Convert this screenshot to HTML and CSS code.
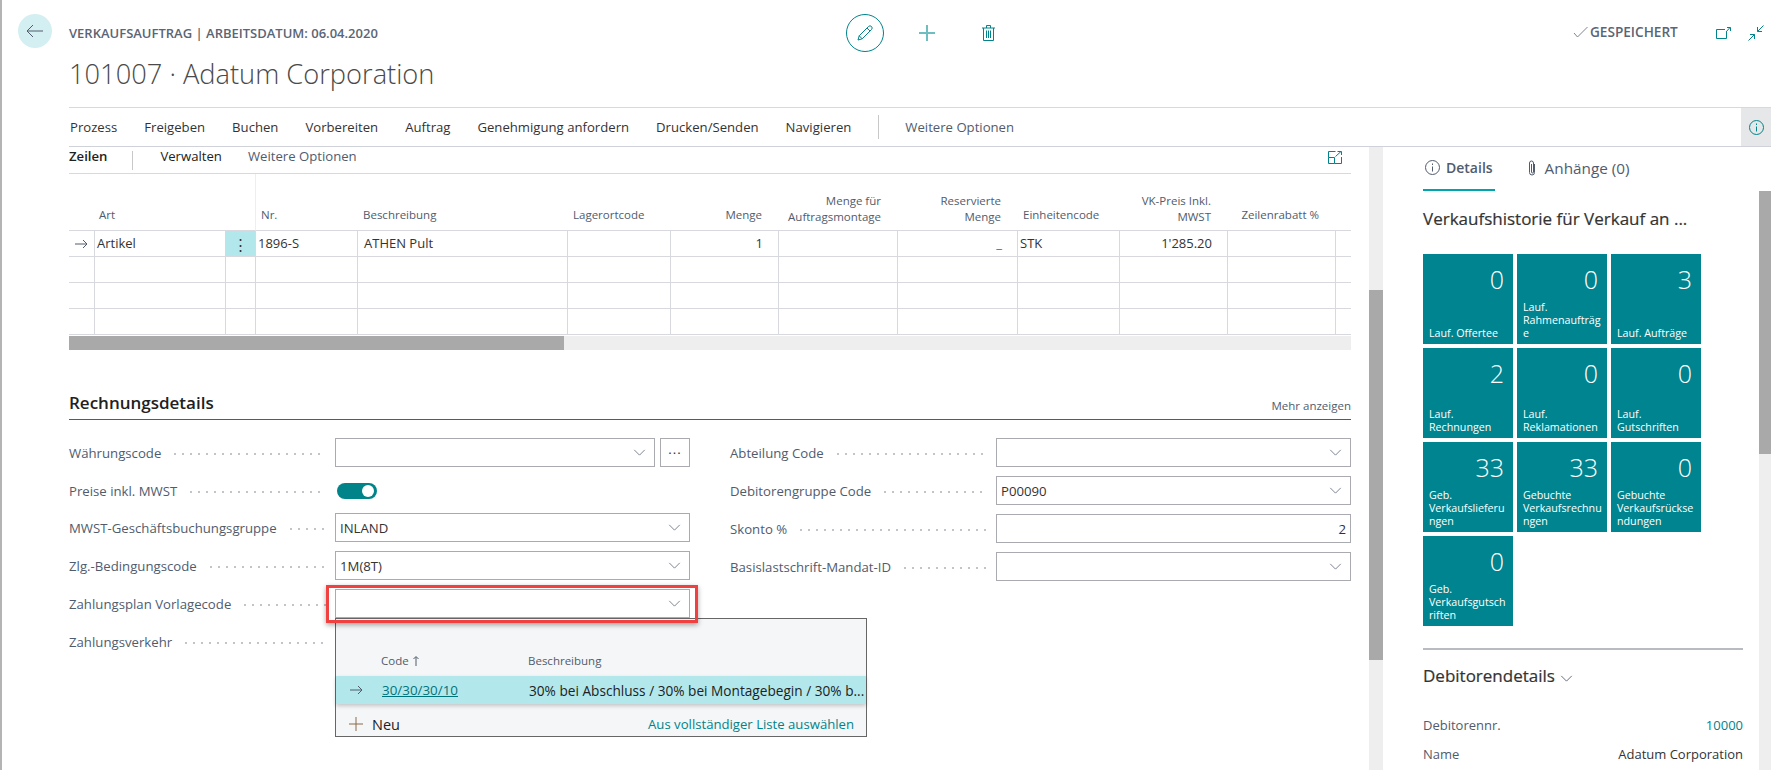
FILE: index.html
```html
<!DOCTYPE html>
<html lang="de">
  <head>
    <meta charset="utf-8">
    <link rel="stylesheet" href="styles.css">
    <title>101007 · Adatum Corporation</title>
  </head>
  <body>
    <div class="page">
      <header class="top">
        <button class="back">
          <svg width="18" height="14" viewBox="0 0 18 14"><path d="M17 7H1M7 1L1 7l6 6"/></svg>
        </button>
        <div class="top-titles">
          <div class="caption">VERKAUFSAUFTRAG | ARBEITSDATUM: 06.04.2020</div>
          <h1>101007 · Adatum Corporation</h1>
        </div>
        <div class="top-tools">
          <span class="edit-ring">
            <svg width="16" height="16" viewBox="0 0 16 16"><path d="M1 15l1.200-4.200L11.500 1.500a1.800 1.800 0 0 1 3 3L5.200 13.800zM2.200 10.800l3 3M10 3l3 3"/></svg>
          </span>
          <svg class="tool-add" width="16" height="16" viewBox="0 0 16 16"><path d="M8 0v16M0 8h16"/></svg>
          <svg class="tool-del" width="13" height="16" viewBox="0 0 13 16"><path d="M0 3h13M4.500 3V.5h4V3M1.500 3v12.500h10V3M4.500 5.500v7.500M6.500 5.500v7.500M8.500 5.500v7.500"/></svg>
        </div>
        <div class="top-status">
          <svg class="check" width="15" height="12" viewBox="0 0 15 12"><path d="M1 7l3.500 4L14.500 1"/></svg>
          <span>GESPEICHERT</span>
        </div>
        <svg class="open-icon" width="15" height="12" viewBox="0 0 15 12"><path d="M9 2.500H.5v9h10V5M10 5l4-4.500M11 .5h3.500V4"/></svg>
        <svg class="shrink-icon" width="16" height="16" viewBox="0 0 16 16"><path d="M15.500.5l-6 6M9.500 2v4.500H14M.5 15.500l6-6M2 9.500h4.500V14"/></svg>
      </header>

      <nav class="actions">
        <a>Prozess</a>
        <a>Freigeben</a>
        <a>Buchen</a>
        <a>Vorbereiten</a>
        <a>Auftrag</a>
        <a>Genehmigung anfordern</a>
        <a>Drucken/Senden</a>
        <a>Navigieren</a>
        <span class="actions-sep"></span>
        <a class="muted more-link">Weitere Optionen</a>
        <span class="info-btn">
          <svg width="15" height="15" viewBox="0 0 15 15"><circle cx="7.500" cy="7.500" r="7"/><path d="M7.500 6.500v5M7.500 3.500v1.500"/></svg>
        </span>
      </nav>

      <div class="main">
        <section class="content">
          <div class="lines-bar">
            <strong>Zeilen</strong>
            <span class="lines-sep"></span>
            <a>Verwalten</a>
            <a class="muted">Weitere Optionen</a>
            <svg class="expand-icon" width="14" height="13" viewBox="0 0 14 13"><path d="M.5 6.500h6v6h-6zM.5 6.500V.5h7M13.500 6v6.500h-7M7.500 5.500L13 .5M9.500.5h4V4"/></svg>
          </div>

          <table class="lines">
            <colgroup>
              <col class="c26"><col class="c131"><col class="c30"><col class="c102"><col class="c210"><col class="c103"><col class="c108"><col class="c119"><col class="c120"><col class="c102"><col class="c108"><col class="c108"><col class="c15">
            </colgroup>
            <thead>
              <tr>
                <th></th>
                <th class="art-head">Art</th>
                <th class="frozen-end"></th>
                <th>Nr.</th>
                <th>Beschreibung</th>
                <th>Lagerortcode</th>
                <th class="num">Menge</th>
                <th class="num two-line">Menge für<br>Auftragsmontage</th>
                <th class="num two-line">Reservierte<br>Menge</th>
                <th>Einheitencode</th>
                <th class="num two-line">VK-Preis Inkl.<br>MWST</th>
                <th class="num">Zeilenrabatt %</th>
                <th></th>
              </tr>
            </thead>
            <tbody>
              <tr>
                <td class="arrow-cell">
                  <svg width="13" height="10" viewBox="0 0 13 10"><path d="M0 5h12M8 1l4 4-4 4"/></svg>
                </td>
                <td>Artikel</td>
                <td class="dots-cell">⋮</td>
                <td>1896-S</td>
                <td class="desc-cell">ATHEN Pult</td>
                <td></td>
                <td class="num">1</td>
                <td></td>
                <td class="num"><span class="dash">_</span></td>
                <td>STK</td>
                <td class="num">1'285.20</td>
                <td></td>
                <td></td>
              </tr>
              <tr><td></td><td></td><td></td><td></td><td></td><td></td><td></td><td></td><td></td><td></td><td></td><td></td><td></td></tr>
              <tr><td></td><td></td><td></td><td></td><td></td><td></td><td></td><td></td><td></td><td></td><td></td><td></td><td></td></tr>
              <tr><td></td><td></td><td></td><td></td><td></td><td></td><td></td><td></td><td></td><td></td><td></td><td></td><td></td></tr>
            </tbody>
          </table>
          <div class="hscroll"><div class="hscroll-thumb"></div></div>

          <div class="section-head">
            <h2>Rechnungsdetails</h2>
            <a>Mehr anzeigen</a>
          </div>

          <div class="form">
            <div class="form-col">
              <div class="field">
                <label>Währungscode</label><i></i>
                <div class="control split">
                  <div class="input select"><svg class="chev" viewBox="0 0 14 8"><path d="M1 1l6 6 6-6"/></svg></div>
                  <div class="input more">···</div>
                </div>
              </div>
              <div class="field tight">
                <label>Preise inkl. MWST</label><i></i>
                <div class="control"><span class="toggle"></span></div>
              </div>
              <div class="field">
                <label>MWST-Geschäftsbuchungsgruppe</label><i></i>
                <div class="control"><div class="input select">INLAND<svg class="chev" viewBox="0 0 14 8"><path d="M1 1l6 6 6-6"/></svg></div></div>
              </div>
              <div class="field">
                <label>Zlg.-Bedingungscode</label><i></i>
                <div class="control"><div class="input select">1M(8T)<svg class="chev" viewBox="0 0 14 8"><path d="M1 1l6 6 6-6"/></svg></div></div>
              </div>
              <div class="field">
                <label>Zahlungsplan Vorlagecode</label><i></i>
                <div class="control open-control">
                  <div class="input select"><svg class="chev" viewBox="0 0 14 8"><path d="M1 1l6 6 6-6"/></svg></div>
                  <div class="dropdown">
                    <div class="drop-head">
                      <span class="drop-code">Code <svg width="6" height="10" viewBox="0 0 6 10"><path d="M3 10V1M.5 3L3 .5 5.500 3"/></svg></span>
                      <span>Beschreibung</span>
                    </div>
                    <div class="drop-row">
                      <svg width="13" height="10" viewBox="0 0 13 10"><path d="M0 5h12M8 1l4 4-4 4"/></svg>
                      <a class="drop-link">30/30/30/10</a>
                      <span class="drop-desc">30% bei Abschluss / 30% bei Montagebegin / 30% b...</span>
                    </div>
                    <div class="drop-foot">
                      <svg width="14" height="14" viewBox="0 0 14 14"><path d="M7 0v14M0 7h14"/></svg>
                      <span class="drop-new">Neu</span>
                      <a>Aus vollständiger Liste auswählen</a>
                    </div>
                  </div>
                  <div class="marker"></div>
                </div>
              </div>
              <div class="field">
                <label>Zahlungsverkehr</label><i></i>
                <div class="control"></div>
              </div>
            </div>
            <div class="form-col">
              <div class="field">
                <label>Abteilung Code</label><i></i>
                <div class="control"><div class="input select"><svg class="chev" viewBox="0 0 14 8"><path d="M1 1l6 6 6-6"/></svg></div></div>
              </div>
              <div class="field">
                <label>Debitorengruppe Code</label><i></i>
                <div class="control"><div class="input select">P00090<svg class="chev" viewBox="0 0 14 8"><path d="M1 1l6 6 6-6"/></svg></div></div>
              </div>
              <div class="field">
                <label>Skonto %</label><i></i>
                <div class="control"><div class="input right">2</div></div>
              </div>
              <div class="field">
                <label>Basislastschrift-Mandat-ID</label><i></i>
                <div class="control"><div class="input select"><svg class="chev" viewBox="0 0 14 8"><path d="M1 1l6 6 6-6"/></svg></div></div>
              </div>
            </div>
          </div>
        </section>

        <div class="vscroll main-scroll"><div class="vscroll-thumb"></div></div>

        <aside class="factbox">
          <div class="tabs">
            <a class="tab active">
              <svg width="15" height="15" viewBox="0 0 15 15"><circle cx="7.500" cy="7.500" r="7"/><path d="M7.500 6.500v5M7.500 3.500v1.500"/></svg>
              Details
            </a>
            <a class="tab">
              <svg width="10" height="16" viewBox="0 0 10 16"><path d="M7.500 4v8.500a2.500 2.500 0 0 1-5 0V3a2 2 0 0 1 4 0v9a1 1 0 0 1-2 0V4"/></svg>
              Anhänge (0)
            </a>
          </div>
          <h3 class="box-title">Verkaufshistorie für Verkauf an ...</h3>
          <div class="tiles">
            <div class="tile"><b>0</b><span>Lauf. Offertee</span></div>
            <div class="tile"><b>0</b><span>Lauf.<br>Rahmenaufträg<br>e</span></div>
            <div class="tile"><b>3</b><span>Lauf. Aufträge</span></div>
            <div class="tile"><b>2</b><span>Lauf.<br>Rechnungen</span></div>
            <div class="tile"><b>0</b><span>Lauf.<br>Reklamationen</span></div>
            <div class="tile"><b>0</b><span>Lauf.<br>Gutschriften</span></div>
            <div class="tile"><b>33</b><span>Geb.<br>Verkaufslieferu<br>ngen</span></div>
            <div class="tile"><b>33</b><span>Gebuchte<br>Verkaufsrechnu<br>ngen</span></div>
            <div class="tile"><b>0</b><span>Gebuchte<br>Verkaufsrückse<br>ndungen</span></div>
            <div class="tile"><b>0</b><span>Geb.<br>Verkaufsgutsch<br>riften</span></div>
          </div>
          <div class="box-rule"></div>
          <h3 class="box-title details-title">Debitorendetails
            <svg width="13" height="7" viewBox="0 0 14 8"><path d="M1 1l6 6 6-6"/></svg>
          </h3>
          <div class="kv"><span>Debitorennr.</span><a>10000</a></div>
          <div class="kv"><span>Name</span><em>Adatum Corporation</em></div>
        </aside>

        <div class="vscroll side-scroll"><div class="vscroll-thumb"></div></div>
      </div>
    </div>
  </body>
</html>
```

FILE: styles.css
```css
html,
body {
  height: 100%;
  margin: 0;
  overflow: hidden;
  background-color: #fff;
}
body {
  color: #212121;
  font-family: "Open Sans", sans-serif;
  font-size: 13px;
}
svg {
  fill: none;
  stroke: #00838a;
  stroke-width: 1;
  flex: none;
}
a {
  white-space: nowrap;
}
.page {
  display: flex;
  flex-direction: column;
  height: 770px;
  border-left: 2px solid #b4b4b4;
  box-sizing: border-box;
}

/* header */
.top {
  display: flex;
  align-items: flex-start;
  height: 107px;
  flex: none;
  padding-left: 16px;
  box-sizing: border-box;
}
.back {
  display: flex;
  align-items: center;
  justify-content: center;
  width: 34px;
  height: 34px;
  margin-top: 14px;
  padding: 0;
  border: 0;
  border-radius: 50%;
  background-color: #d4eff1;
}
.back svg {
  stroke: #505c6d;
}
.top-titles {
  width: 777px;
  margin-left: 17px;
  padding-top: 24px;
}
.caption {
  color: #5a6575;
  font-size: 13px;
  line-height: 18px;
  font-weight: 600;
  white-space: nowrap;
}
h1 {
  margin: 12px 0 0;
  color: #4a4a4a;
  font-size: 27.250px;
  line-height: 40px;
  font-weight: 300;
  white-space: nowrap;
}
.top-tools {
  display: flex;
  align-items: center;
  gap: 35px;
  margin-top: 14px;
}
.edit-ring {
  display: flex;
  align-items: center;
  justify-content: center;
  width: 36px;
  height: 36px;
  border: 1px solid #00838a;
  border-radius: 50%;
}
.tool-add {
  stroke: #6fbdc0;
  stroke-width: 2;
}
.tool-del {
  margin-left: 12px;
}
.top-status {
  display: flex;
  align-items: center;
  gap: 2px;
  margin: 23px 0 0 578px;
  color: #5a6575;
  font-size: 13.600px;
  line-height: 18px;
  font-weight: 600;
}
.check {
  stroke: #7d8591;
}
.open-icon {
  margin: 27px 0 0 38px;
}
.shrink-icon {
  margin: 25px 0 0 17px;
}

/* action bar */
.actions {
  display: flex;
  align-items: center;
  flex: none;
  gap: 27px;
  height: 40px;
  margin-left: 67px;
  padding-left: 1px;
  border-top: 1px solid #d7d9de;
  border-bottom: 1px solid #d0d2da;
  box-sizing: border-box;
  color: #333;
  font-size: 13.150px;
}
.muted {
  color: #505c6d;
}
.actions-sep {
  width: 1px;
  height: 24px;
  background-color: #c8c8c8;
}
.more-link {
  margin-left: -1px;
}
.info-btn {
  display: flex;
  align-items: center;
  justify-content: center;
  width: 30px;
  height: 100%;
  margin-left: auto;
  background-color: #e6e7e9;
}

/* main columns */
.main {
  display: flex;
  flex: 1;
  min-height: 0;
}
.content {
  position: relative;
  width: 1282px;
  margin-left: 67px;
  flex: none;
}
.vscroll {
  flex: none;
  background-color: #eee;
}
.vscroll-thumb {
  background-color: #a9a9a9;
}
.main-scroll {
  width: 14px;
  margin-left: 18px;
}
.main-scroll .vscroll-thumb {
  height: 370px;
  margin-top: 143px;
}
.side-scroll {
  width: 12px;
  margin-top: 44px;
}
.side-scroll .vscroll-thumb {
  height: 263px;
}

/* lines */
.lines-bar {
  display: flex;
  align-items: center;
  height: 27px;
  padding-bottom: 9px;
  border-bottom: 1px solid #d7d9de;
  box-sizing: border-box;
  font-size: 13.150px;
}
.lines-bar strong {
  font-weight: 600;
}
.lines-sep {
  width: 1px;
  height: 19px;
  margin: 9px 27px 0 25px;
  background-color: #c8c8c8;
}
.lines-bar .muted {
  margin-left: 26px;
}
.expand-icon {
  margin: 3px 9px 0 auto;
}
.lines {
  width: 1282px;
  border-collapse: separate;
  border-spacing: 0;
  table-layout: fixed;
  color: #333;
}
.c26 { width: 26px; }
.c131 { width: 131px; }
.c30 { width: 30px; }
.c102 { width: 102px; }
.c210 { width: 210px; }
.c103 { width: 103px; }
.c108 { width: 108px; }
.c119 { width: 119px; }
.c120 { width: 120px; }
.c15 { width: 15px; }
.lines th {
  height: 57px;
  padding: 0 6px 7px 5px;
  border-bottom: 1px solid #d7d9de;
  color: #505c6d;
  font-size: 11.500px;
  line-height: 16px;
  font-weight: 400;
  text-align: left;
  vertical-align: bottom;
  box-sizing: border-box;
}
.lines th.art-head {
  padding-left: 4px;
}
.lines th.frozen-end {
  border-right: 1px solid #eee;
}
.lines th.two-line {
  padding-bottom: 5px;
}
.lines td {
  height: 26px;
  padding: 0 2px 2px;
  border-right: 1px solid #d7d9de;
  border-bottom: 1px solid #d7d9de;
  box-sizing: border-box;
  white-space: nowrap;
}
.lines td:last-child {
  border-right: 0;
}
.lines .num {
  padding-right: 15px;
  text-align: right;
}
.lines th.num {
  padding-right: 17px;
}
.arrow-cell svg {
  stroke: #505c6d;
  display: block;
  margin: 2px auto 0;
}
.lines .dots-cell {
  padding: 0;
  background-color: #b2e8ec;
  text-align: center;
  font-size: 15px;
}
.lines .desc-cell {
  padding-left: 6px;
}
.dash {
  color: #00838a;
}
.hscroll {
  height: 14px;
  margin-top: 1px;
  background-color: #eee;
}
.hscroll-thumb {
  width: 495px;
  height: 100%;
  background-color: #a9a9a9;
}

/* rechnungsdetails */
.section-head {
  display: flex;
  align-items: flex-end;
  justify-content: space-between;
  height: 70px;
  padding-bottom: 4px;
  border-bottom: 1px solid #505c6d;
  box-sizing: border-box;
}
.section-head h2 {
  margin: 0;
  color: #212121;
  font-size: 17px;
  line-height: 24px;
  font-weight: 600;
}
.section-head a {
  margin-bottom: 2px;
  color: #505c6d;
  font-size: 11.500px;
}
.form {
  display: grid;
  grid-template-columns: 621px 621px;
  column-gap: 40px;
  padding-top: 18px;
  font-size: 13.200px;
}
.field {
  display: flex;
  align-items: center;
  height: 29px;
  margin-bottom: 9px;
}
.field.tight {
  margin-bottom: 8px;
}
.field label {
  flex: none;
  color: #505c6d;
  white-space: nowrap;
}
.field i {
  flex: 1;
  height: 2px;
  margin: 2px 9px 0 10px;
  background-image: radial-gradient(circle, #c0c4cb 0.8px, transparent 1px);
  background-size: 8px 2px;
  background-repeat: repeat-x;
}
.control {
  position: relative;
  flex: none;
  width: 355px;
}
.split {
  display: flex;
  gap: 5px;
}
.split .select {
  flex: 1;
}
.input {
  display: flex;
  align-items: center;
  justify-content: space-between;
  height: 29px;
  padding: 0 4px;
  border: 1px solid #a9abb0;
  box-sizing: border-box;
  color: #333;
  background-color: #fff;
}
.input.select .chev {
  margin-left: auto;
}
.chev {
  width: 13px;
  height: 7px;
  margin-right: 4px;
  stroke: #6b7483;
}
.more {
  width: 30px;
  justify-content: center;
  letter-spacing: 1px;
}
.right {
  justify-content: flex-end;
}
.toggle {
  position: relative;
  display: block;
  width: 40px;
  height: 16px;
  margin-left: 2px;
  border-radius: 8px;
  background-color: #00848a;
}
.toggle::after {
  content: "";
  position: absolute;
  top: 2px;
  right: 3px;
  width: 12px;
  height: 12px;
  border-radius: 50%;
  background-color: #fff;
}

/* red marker and lookup */
.marker {
  position: absolute;
  top: -4px;
  left: -9px;
  width: 372px;
  height: 38px;
  border: 3px solid #f04040;
  box-sizing: border-box;
  box-shadow: 0 2px 5px rgba(0, 0, 0, 0.35);
}
.dropdown {
  position: absolute;
  top: 29px;
  left: 0;
  width: 532px;
  height: 119px;
  border: 1px solid #666;
  box-sizing: border-box;
  background-color: #f5f6f7;
}
.drop-head {
  display: flex;
  align-items: center;
  height: 57px;
  padding: 26px 0 0 45px;
  box-sizing: border-box;
  color: #505c6d;
  font-size: 11.500px;
}
.drop-code {
  display: flex;
  align-items: center;
  gap: 4px;
  width: 147px;
}
.drop-code svg {
  stroke: #505c6d;
}
.drop-row {
  display: flex;
  align-items: center;
  height: 28px;
  padding-left: 14px;
  background-color: #b2e8ec;
  box-shadow: 0 2px 4px rgba(0, 0, 0, 0.2);
  white-space: nowrap;
}
.drop-row svg {
  stroke: #505c6d;
}
.drop-link {
  width: 147px;
  margin-left: 19px;
  color: #00737a;
  font-size: 13.400px;
  text-decoration: underline;
}
.drop-desc {
  font-size: 13.650px;
}
.drop-foot {
  display: flex;
  align-items: center;
  height: 32px;
  padding: 8px 12px 0 13px;
  box-sizing: border-box;
}
.drop-foot svg {
  stroke: #8a6a4a;
}
.drop-new {
  margin-left: 9px;
  font-size: 14.500px;
}
.drop-foot a {
  margin-left: auto;
  color: #00838a;
  font-size: 13.150px;
}

/* factbox */
.factbox {
  width: 376px;
  flex: none;
  padding: 0 16px 0 40px;
  box-sizing: border-box;
}
.tabs {
  display: flex;
  gap: 30px;
  height: 44px;
}
.tab {
  display: flex;
  align-items: center;
  gap: 8px;
  height: 44px;
  padding: 0 2px 2px;
  box-sizing: border-box;
  color: #505c6d;
  font-size: 15.300px;
}
.tab svg {
  stroke: #505c6d;
}
.tab.active {
  gap: 6px;
  border-bottom: 2px solid #00a4ad;
  font-size: 14px;
  font-weight: 600;
}
.box-title {
  margin: 16px 0 0;
  color: #333;
  font-size: 17px;
  line-height: 24px;
  font-weight: 400;
  -webkit-text-stroke: 0.2px #333;
  white-space: nowrap;
}
.tiles {
  display: grid;
  grid-template-columns: repeat(3, 90px);
  grid-auto-rows: 90px;
  gap: 4px;
  margin-top: 23px;
}
.tile {
  display: flex;
  flex-direction: column;
  justify-content: space-between;
  padding: 7px 9px 4px 6px;
  box-sizing: border-box;
  color: #fff;
  background-color: #00848f;
  overflow: hidden;
}
.tile b {
  font-size: 25px;
  line-height: 36px;
  font-weight: 300;
  text-align: right;
}
.tile span {
  margin-right: -9px;
  font-size: 10.700px;
  line-height: 13px;
  white-space: nowrap;
}
.box-rule {
  height: 2px;
  margin-top: 22px;
  background-color: #b8bcc0;
}
.details-title {
  display: flex;
  align-items: center;
  gap: 5px;
  margin-top: 14px;
}
.details-title svg {
  margin-top: 4px;
  stroke: #505c6d;
}
.kv {
  display: flex;
  justify-content: space-between;
  margin-top: 9px;
  color: #505c6d;
  line-height: 20px;
}
.details-title + .kv {
  margin-top: 27px;
}
.kv a {
  color: #00838a;
}
.kv em {
  color: #333;
  font-style: normal;
}
```
